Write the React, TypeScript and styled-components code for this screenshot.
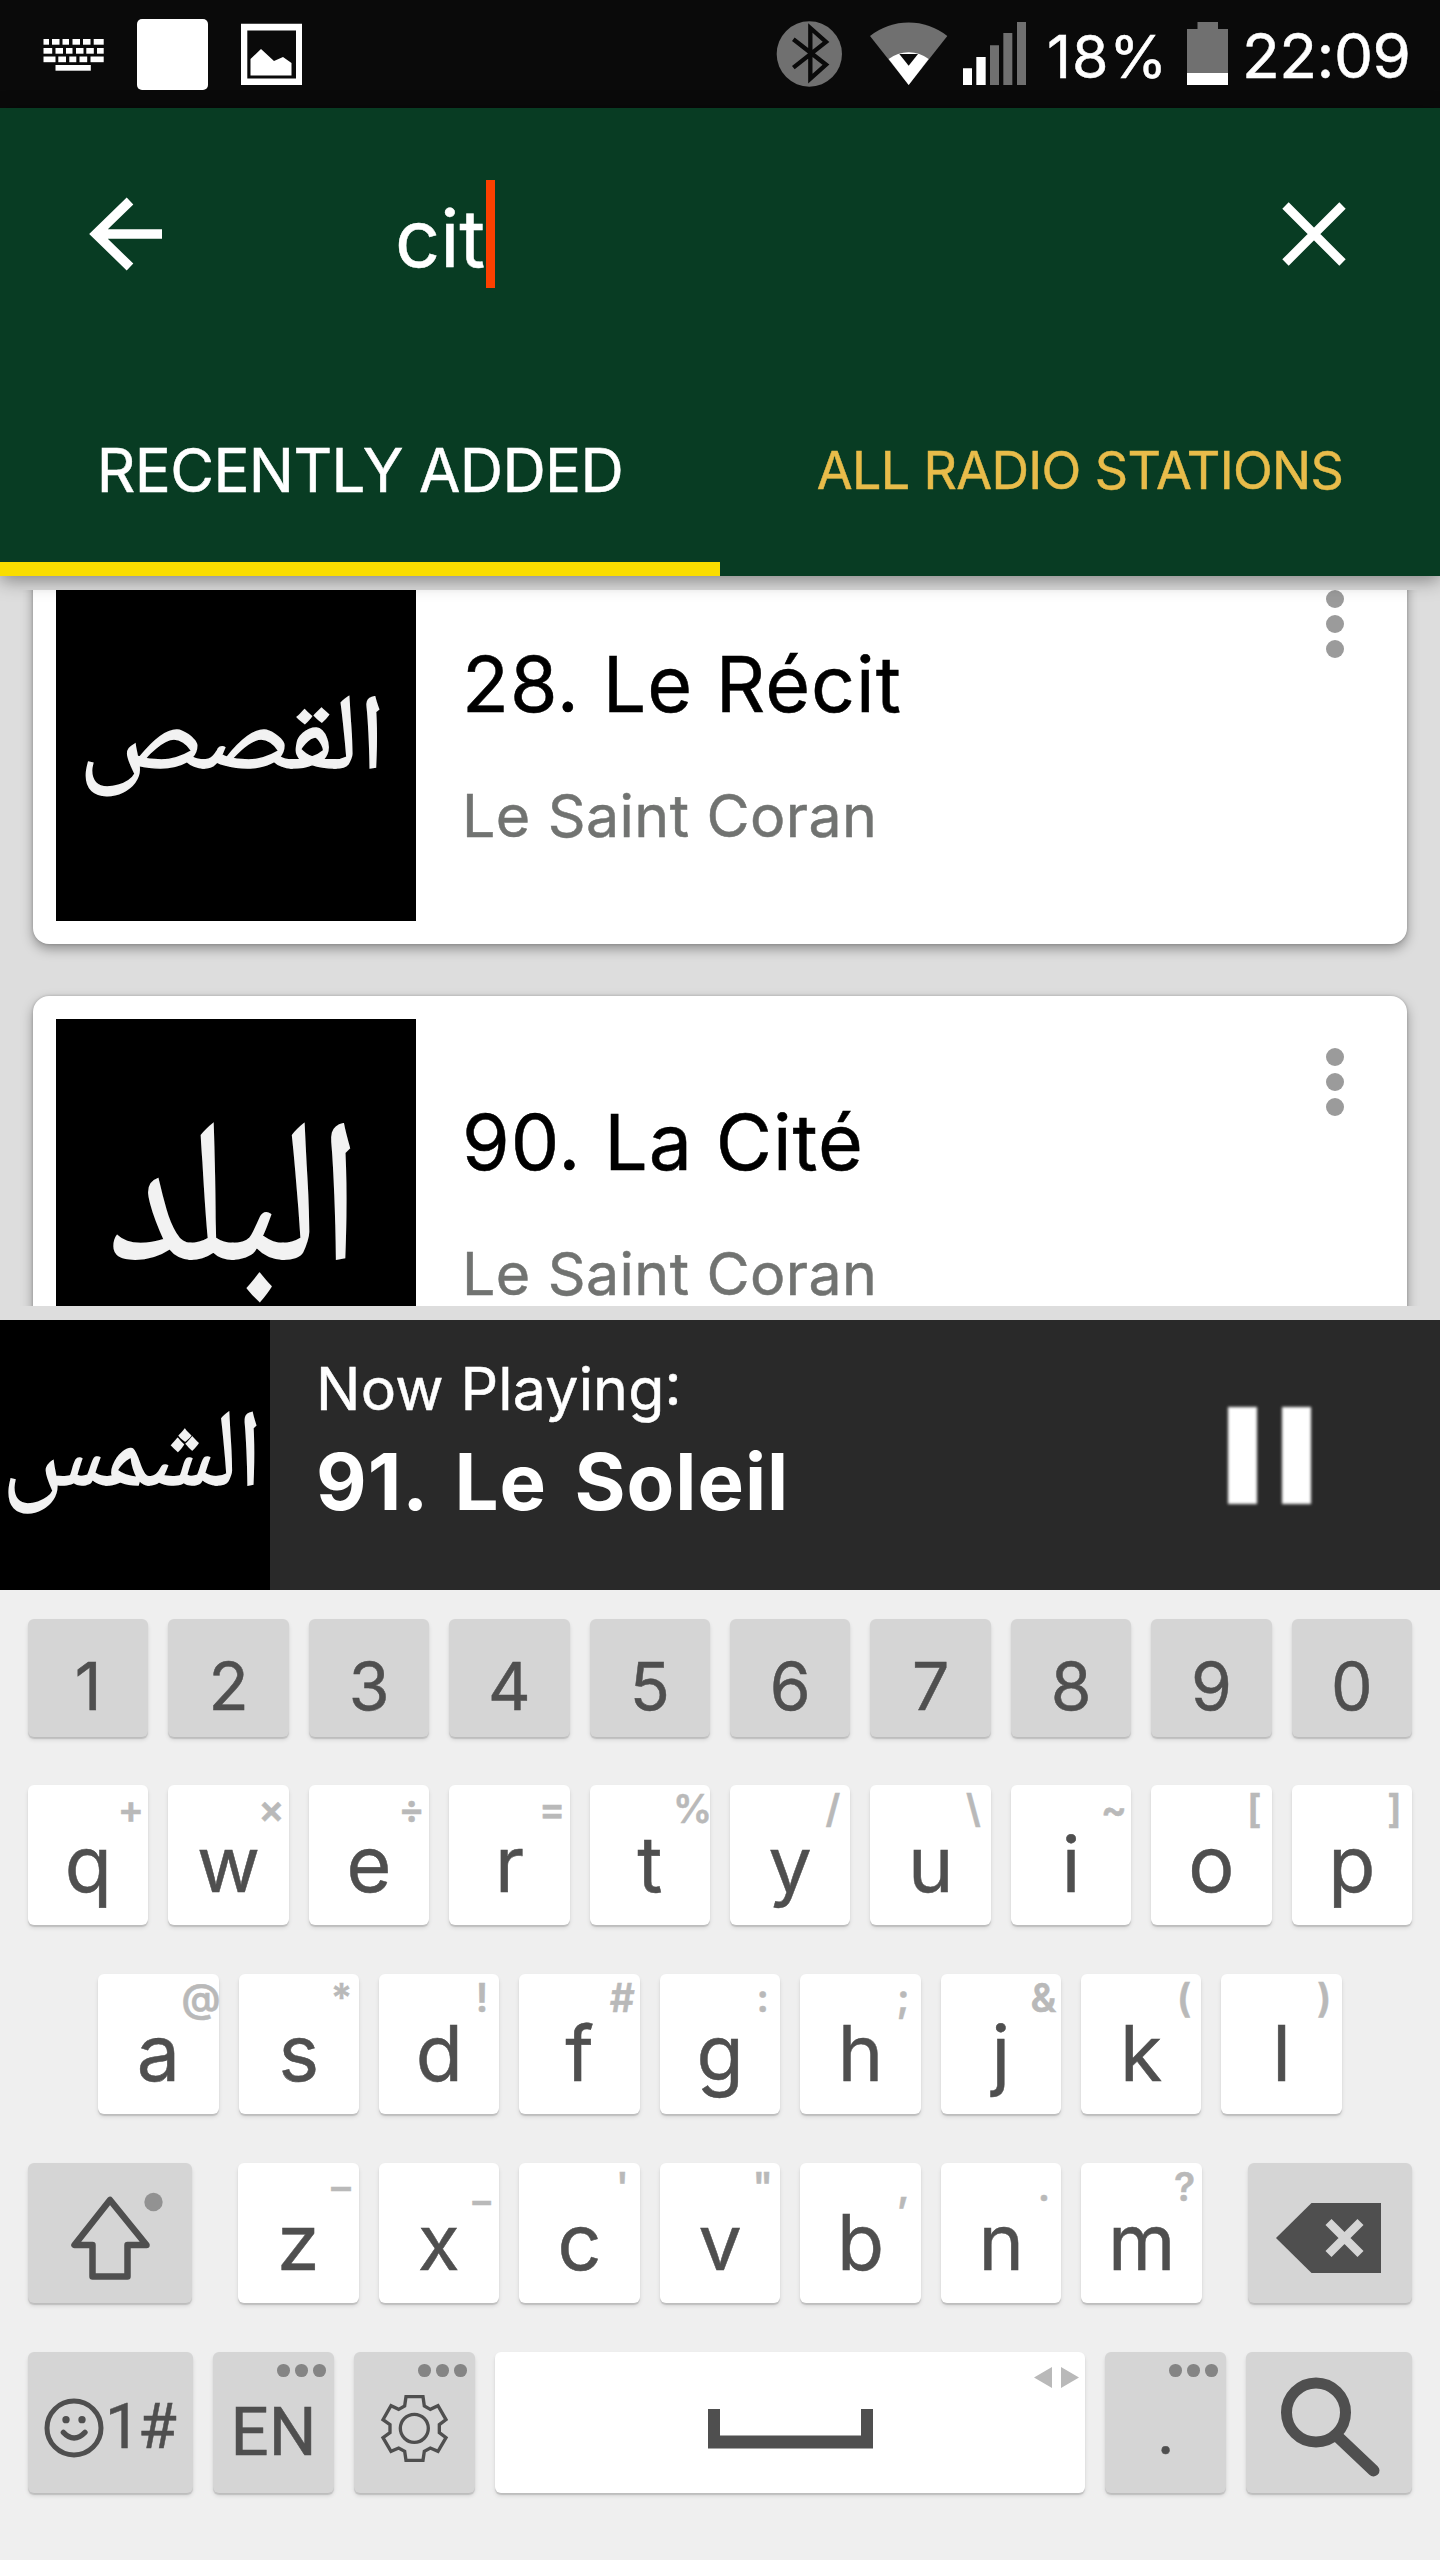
import React from 'react';
import styled, { createGlobalStyle } from 'styled-components';

const GlobalStyle = createGlobalStyle`
  * { box-sizing: border-box; }
  body { margin: 0; background: #efefef; }
`;

const ui = `Inter, "Noto Sans", sans-serif`;
const naskh = `"Noto Naskh Arabic", "Amiri", "Scheherazade", "KacstOne", serif`;

const Screen = styled.div`
  width: 1440px;
  height: 2560px;
  display: flex;
  flex-direction: column;
  overflow: hidden;
  font-family: ${ui};
  font-weight: 400;
  -webkit-text-stroke: 0.5px currentColor;
  background: #efefef;
`;

/* ---------- status bar ---------- */
const StatusBar = styled.div`
  height: 108px;
  flex: none;
  display: flex;
  justify-content: space-between;
  background: #0a0a0a;
  color: #fff;
`;
const StatusGroup = styled.div`
  display: flex;
  align-items: flex-start;
  svg { display: block; flex: none; }
`;
const StatusText = styled.span<{ $size: number; $width: number; $pad: number; $track: number; $line: number }>`
  width: ${p => p.$width}px;
  padding-left: ${p => p.$pad}px;
  font-size: ${p => p.$size}px;
  letter-spacing: ${p => p.$track}px;
  line-height: ${p => p.$line}px;
  white-space: nowrap;
`;

/* ---------- header ---------- */
const Header = styled.header`
  position: relative;
  z-index: 1;
  height: 468px;
  flex: none;
  display: flex;
  flex-direction: column;
  background: #083c23;
  box-shadow: 0 4px 18px rgba(0, 0, 0, 0.42);
`;
const Toolbar = styled.div`
  height: 252px;
  display: flex;
  align-items: center;
  padding: 0 78px 0 74px;
  svg { display: block; flex: none; }
`;
const SearchField = styled.div`
  flex: 1;
  display: flex;
  align-items: center;
  margin-left: 217px;
  color: #fff;
`;
const Query = styled.span`
  width: 91px;
  padding-top: 8px;
  font-size: 79px;
  line-height: 100px;
  white-space: nowrap;
`;
const Caret = styled.span`
  width: 9px;
  height: 108px;
  background: #fb4000;
`;
const Tabs = styled.div`
  flex: 1;
  display: flex;
`;
const Tab = styled.div<{ $active?: boolean }>`
  flex: 1;
  padding-top: ${p => (p.$active ? 74 : 79)}px;
  border-bottom: 14px solid ${p => (p.$active ? '#f9dd00' : 'transparent')};
  text-align: center;
  color: ${p => (p.$active ? '#fff' : '#e8bc4a')};
  font-size: ${p => (p.$active ? 60 : 52)}px;
  line-height: ${p => (p.$active ? 72 : 64)}px;
  letter-spacing: -0.65px;
  white-space: nowrap;
`;

/* ---------- station list ---------- */
const Main = styled.main`
  height: 744px;
  flex: none;
  padding: 14px 0;
  background: #ddd;
`;
const ListViewport = styled.div`
  height: 716px;
  overflow: hidden;
`;
const List = styled.div`
  margin-top: -52px;
  padding: 0 33px;
  display: flex;
  flex-direction: column;
  gap: 52px;
`;
const Card = styled.article`
  height: 406px;
  flex: none;
  display: flex;
  padding: 23px;
  border-radius: 16px;
  background: #fff;
  box-shadow: 0 5px 12px rgba(0, 0, 0, 0.35), 0 0 3px rgba(0, 0, 0, 0.2);
`;
const Cover = styled.div<{ $size: number }>`
  width: ${p => p.$size}px;
  height: ${p => p.$size}px;
  flex: none;
  display: flex;
  align-items: center;
  justify-content: center;
  overflow: hidden;
  background: #000;
`;
const Calligraphy = styled.span<{ $size: number; $x: number; $y: number; $sy: number }>`
  font-family: ${naskh};
  font-size: ${p => p.$size}px;
  font-weight: 400;
  line-height: 1;
  color: #f2f2f2;
  white-space: nowrap;
  -webkit-text-stroke: 1.5px #f2f2f2;
  transform: translate(${p => p.$x}px, ${p => p.$y}px) scaleY(${p => p.$sy});
`;
const CardText = styled.div`
  flex: 1;
  padding: 75px 0 0 46px;
`;
const Title = styled.div`
  font-size: 77px;
  line-height: 96px;
  letter-spacing: 1px;
  color: #000;
`;
const Subtitle = styled.div`
  margin-top: 51px;
  font-size: 59px;
  line-height: 66px;
  letter-spacing: 0.45px;
  color: #717371;
`;
const More = styled.svg`
  display: block;
  margin: 26px 39px 0 0;
`;

/* ---------- now playing ---------- */
const Player = styled.section`
  height: 270px;
  flex: none;
  display: flex;
  background: #292929;
  color: #fff;
`;
const PlayerText = styled.div`
  flex: 1;
  padding: 32px 0 0 46px;
`;
const PlayerLabel = styled.div`
  font-size: 59px;
  line-height: 74px;
  letter-spacing: 0.2px;
`;
const Colon = styled.span`
  display: inline-block;
  transform: translateY(-5px);
`;
const PlayerTitle = styled.div`
  margin-top: 10px;
  font-size: 78px;
  font-weight: 700;
  line-height: 92px;
  letter-spacing: 1px;
  word-spacing: 8px;
  -webkit-text-stroke: 0;
`;
const PauseButton = styled.div`
  display: flex;
  gap: 25px;
  padding: 87px 129px 0 0;
`;
const PauseBar = styled.i`
  width: 29px;
  height: 97px;
  background: #fff;
  filter: blur(1.4px);
`;

/* ---------- keyboard ---------- */
const Keyboard = styled.section`
  flex: 1;
  padding: 29px 28px 0;
  display: flex;
  flex-direction: column;
  gap: 49px;
`;
const KeyRow = styled.div<{ $inset?: number; $gap?: number; $up?: number }>`
  display: flex;
  justify-content: space-between;
  gap: ${p => p.$gap ?? 20}px;
  padding: 0 ${p => p.$inset ?? 0}px;
  margin-top: ${p => -(p.$up ?? 0)}px;
`;
const KeyGroup = styled.div`
  flex: 1;
  display: flex;
  gap: 20px;
`;
const Key = styled.div<{ $w?: number; $h?: number; $dark?: boolean }>`
  position: relative;
  ${p => (p.$w ? `flex: none; width: ${p.$w}px;` : 'flex: 1 1 0; min-width: 0;')}
  height: ${p => p.$h ?? 140}px;
  display: flex;
  align-items: center;
  justify-content: center;
  border-radius: 6px;
  background: ${p => (p.$dark ? '#d5d5d5' : '#fff')};
  box-shadow: 0 2px 1px rgba(0, 0, 0, 0.13), 0 3px 4px rgba(0, 0, 0, 0.1);
  color: #4f4f4f;
  svg { display: block; flex: none; }
`;
const Letter = styled.span`
  padding-top: 17px;
  font-size: 77px;
  line-height: 90px;
`;
const Digit = styled.span`
  padding-top: 16px;
  font-size: 66px;
  line-height: 80px;
`;
const Period = styled.span`
  padding-top: 20px;
  font-size: 58px;
  line-height: 70px;
`;
const Hint = styled.span`
  position: absolute;
  top: 0;
  right: 0;
  width: 35px;
  display: flex;
  justify-content: center;
  font-size: 39px;
  font-weight: 600;
  line-height: 48px;
  color: #b9b9b9;
`;
const RobotoLabel = styled.span<{ $size: number; $y: number; $track: number; $fill?: boolean }>`
  ${p => (p.$fill ? 'flex: 1;' : '')}
  font-family: Roboto, sans-serif;
  font-size: ${p => p.$size}px;
  font-weight: 400;
  letter-spacing: ${p => p.$track}px;
  line-height: 80px;
  padding-top: ${p => p.$y}px;
  white-space: nowrap;
`;
const Dots = styled.span`
  position: absolute;
  top: 12px;
  right: 8px;
  display: flex;
  gap: 5.6px;
  i { width: 12.6px; height: 12.6px; border-radius: 50%; background: #858585; }
`;

const KeyboardGlyph = () => {
  const rows: [number, number[][]][] = [
    [39, [[43.5, 5.5], [52, 7.5], [62.5, 6.5], [72.5, 7.5], [83, 7.5], [93.7, 10]]],
    [48, [[43.5, 8.7], [55.5, 7.5], [66, 6.5], [76, 7.5], [86.3, 7.5], [97, 6.7]]],
    [56.5, [[43.5, 12], [58.3, 7.7], [69.3, 7], [79.5, 7.7], [90.5, 13.2]]],
    [65, [[55.5, 35.3]]],
  ];
  return (
    <svg width="137" height="108" fill="#fff">
      {rows.flatMap(([y, cells]) => cells.map(([x, w]) => <rect key={`${x}-${y}`} x={x} y={y} width={w} height="5.7" />))}
    </svg>
  );
};

const WhiteTile = styled.i`
  width: 71px;
  height: 71px;
  margin: 19px 33px 0 0;
  border-radius: 5px;
  background: #fff;
`;

const MoreDots = () => (
  <More width="20" height="80" fill="#9b9b9b">
    <circle cx="10" cy="12" r="9" />
    <circle cx="10" cy="37" r="9" />
    <circle cx="10" cy="62" r="9" />
  </More>
);

type ArtProps = { text: string; size: number; x: number; y: number; sy: number };
const stations: { title: string; art: ArtProps }[] = [
  { title: '28. Le Récit', art: { text: 'القصص', size: 113, x: -4, y: 3, sy: 0.94 } },
  { title: '90. La Cité', art: { text: 'البلد', size: 172, x: -2, y: 17, sy: 1.17 } },
];

const Artwork = ({ box, art }: { box: number; art: ArtProps }) => (
  <Cover $size={box}>
    <Calligraphy $size={art.size} $x={art.x} $y={art.y} $sy={art.sy} lang="ar">{art.text}</Calligraphy>
  </Cover>
);

const topKeys = [...'qwertyuiop'].map((k, i) => [k, ['+', '×', '÷', '=', '%', '/', '\\', '~', '[', ']'][i]]);
const homeKeys = [...'asdfghjkl'].map((k, i) => [k, ['@', '*', '!', '#', ':', ';', '&', '(', ')'][i]]);
const bottomKeys = [...'zxcvbnm'].map((k, i) => [k, ['–', '_', "'", '"', ',', '.', '?'][i]]);

const LetterKeys = ({ keys }: { keys: string[][] }) => (
  <>
    {keys.map(([k, h]) => (
      <Key key={k}>
        <Letter>{k}</Letter>
        <Hint>{h}</Hint>
      </Key>
    ))}
  </>
);

const MoreHint = () => <Dots><i /><i /><i /></Dots>;

export default function App() {
  return (
    <Screen>
      <GlobalStyle />
      <StatusBar>
        <StatusGroup>
          <KeyboardGlyph />
          <WhiteTile />
          <svg width="62" height="108">
            <path fill="#fff" fillRule="evenodd" d="M0 23.7H61V85H0ZM6.3 30.5V78.5H55V30.5Z" />
            <path fill="#fff" d="M9.5 59L20 49L33 61L42 57L50.5 63V75.5H9.5Z" />
          </svg>
        </StatusGroup>
        <StatusGroup>
          <svg width="251" height="108">
            <g transform="translate(-6 10) scale(.33333)">
              <circle cx="118" cy="132" r="98" fill="#707070" />
              <path d="M70 88L168 164L121 206V54L168 96L70 173" fill="none" stroke="#0a0a0a" strokeWidth="13" />
              <path d="M416 225L300 78A187 187 0 0 1 532 78Z" fill="#707070" />
              <path d="M416 225L356 147A98 98 0 0 1 476 147Z" fill="#fff" />
              <path d="M388 132H444L416 167Z" fill="#0a0a0a" />
              <path d="M579 175H606V225H579ZM619 141H647V225H619Z" fill="#fff" />
              <path d="M660 106H687V225H660ZM700 69H727V225H700ZM741 36H768V225H741Z" fill="#707070" />
            </g>
          </svg>
          <StatusText $size={59} $width={160} $pad={20} $track={0.9} $line={114}>18%</StatusText>
          <svg width="41" height="108">
            <path d="M0 29H10.5V22H31V29H41V73H0Z" fill="#707070" />
            <path d="M0 73H41V85H0Z" fill="#fff" />
          </svg>
          <StatusText $size={62} $width={212} $pad={14} $track={-0.5} $line={112}>22:09</StatusText>
        </StatusGroup>
      </StatusBar>

      <Header>
        <Toolbar>
          <svg width="104" height="104" viewBox="0 0 104 104">
            <path d="M88 52H22M56 19L22 52L56 85" fill="none" stroke="#fff" strokeWidth="9.5" />
          </svg>
          <SearchField>
            <Query>cit</Query>
            <Caret />
          </SearchField>
          <svg width="96" height="96" viewBox="0 0 96 96">
            <path d="M19.5 19.5L76.5 76.5M76.5 19.5L19.5 76.5" stroke="#fff" strokeWidth="9" />
          </svg>
        </Toolbar>
        <Tabs>
          <Tab $active>RECENTLY ADDED</Tab>
          <Tab>ALL RADIO STATIONS</Tab>
        </Tabs>
      </Header>

      <Main>
        <ListViewport>
          <List>
            {stations.map(s => (
              <Card key={s.title}>
                <Artwork box={360} art={s.art} />
                <CardText>
                  <Title>{s.title}</Title>
                  <Subtitle>Le Saint Coran</Subtitle>
                </CardText>
                <MoreDots />
              </Card>
            ))}
          </List>
        </ListViewport>
      </Main>

      <Player>
        <Artwork box={270} art={{ text: 'الشمس', size: 102, x: -3, y: 7, sy: 1.06 }} />
        <PlayerText>
          <PlayerLabel>Now Playing<Colon>:</Colon></PlayerLabel>
          <PlayerTitle>91. Le Soleil</PlayerTitle>
        </PlayerText>
        <PauseButton>
          <PauseBar />
          <PauseBar />
        </PauseButton>
      </Player>

      <Keyboard>
        <KeyRow>
          {[...'1234567890'].map(d => <Key key={d} $dark $h={118}><Digit>{d}</Digit></Key>)}
        </KeyRow>
        <KeyRow $up={1}><LetterKeys keys={topKeys} /></KeyRow>
        <KeyRow $inset={70.2}><LetterKeys keys={homeKeys} /></KeyRow>
        <KeyRow $gap={46}>
          <Key $w={164} $dark>
            <svg width="164" height="140">
              <path d="M82 37L46.5 82H64.5V113.5H99.5V82H118.5Z" fill="none" stroke="#4f4f4f" strokeWidth="6.5" strokeLinejoin="round" />
              <circle cx="125.5" cy="39" r="9.2" fill="#929292" />
            </svg>
          </Key>
          <KeyGroup><LetterKeys keys={bottomKeys} /></KeyGroup>
          <Key $w={164} $dark>
            <svg width="164" height="140">
              <path d="M28 75L63.5 40H133V110H63.5Z" fill="#4f4f4f" />
              <path d="M80.5 59L112.5 91M112.5 59L80.5 91" stroke="#d5d5d5" strokeWidth="8.5" />
            </svg>
          </Key>
        </KeyRow>
        <KeyRow>
          <Key $w={165} $h={141} $dark>
            <svg width="77" height="141">
              <g transform="translate(-8 28) scale(.33333)" fill="none" stroke="#4f4f4f">
                <circle cx="162" cy="144" r="81" strokeWidth="15" />
                <path d="M130 157Q162 191 195 157" strokeWidth="16" strokeLinecap="round" />
                <circle cx="138" cy="119" r="11" fill="#4f4f4f" stroke="none" />
                <circle cx="186" cy="119" r="11" fill="#4f4f4f" stroke="none" />
              </g>
            </svg>
            <RobotoLabel $fill $size={63} $y={8} $track={-2.5}>1#</RobotoLabel>
          </Key>
          <Key $w={121} $h={141} $dark>
            <RobotoLabel $size={67} $y={18} $track={0}>EN</RobotoLabel>
            <MoreHint />
          </Key>
          <Key $w={121} $h={141} $dark>
            <svg width="121" height="141">
              <g transform="translate(-334 28) scale(.33333)" fill="none" stroke="#4f4f4f" strokeWidth="10">
                <path d="M1158 50H1209L1213 78L1231 88L1254 77L1278 119L1258 134V158L1278 173L1254 214L1231 204L1213 214L1209 241H1158L1154 214L1136 204L1113 214L1089 173L1110 158V134L1089 119L1113 77L1136 88L1154 78Z" />
                <circle cx="1183" cy="145" r="42" />
              </g>
            </svg>
            <MoreHint />
          </Key>
          <Key $h={141}>
            <svg width="590" height="141">
              <path d="M213 57H225V83.5H366V57H378V96.5H213Z" fill="#4f4f4f" />
              <path d="M539 25.5L557 15V36ZM584 25.5L566 15V36Z" fill="#b9b9b9" />
            </svg>
          </Key>
          <Key $w={121} $h={141} $dark>
            <Period>.</Period>
            <MoreHint />
          </Key>
          <Key $w={166} $h={141} $dark>
            <svg width="166" height="141" fill="none" stroke="#4f4f4f">
              <circle cx="70" cy="60.5" r="29.5" strokeWidth="11" />
              <path d="M90 83L127.5 118.5" strokeWidth="12" strokeLinecap="round" />
            </svg>
          </Key>
        </KeyRow>
      </Keyboard>
    </Screen>
  );
}
